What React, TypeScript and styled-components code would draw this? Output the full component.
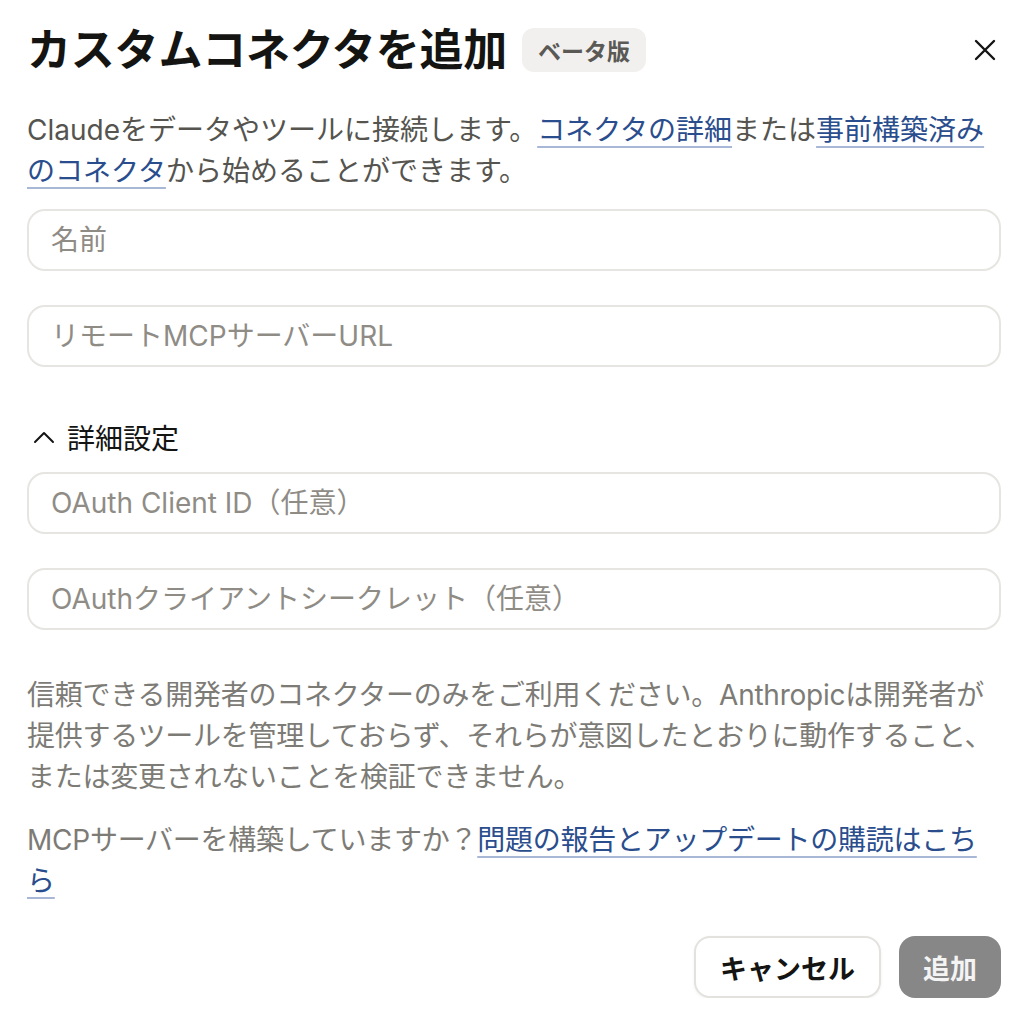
import styled, { createGlobalStyle } from "styled-components";

const GlobalStyle = createGlobalStyle`
  body {
    margin: 0;
    background: #ffffff;
    font-family: "Inter", "Noto Sans CJK JP", sans-serif;
    color: #141413;
  }
`;

export default function App() {
  return (
    <>
      <GlobalStyle />
      <Dialog>
        <Header>
          <TitleGroup>
            <Title>カスタムコネクタを追加</Title>
            <Badge>ベータ版</Badge>
          </TitleGroup>
          <CloseButton aria-label="閉じる">
            <svg width="24" height="24" viewBox="0 0 24 24" fill="none" stroke="#141413" strokeWidth="2.4" strokeLinecap="round">
              <path d="M3 3 L21 21 M21 3 L3 21" />
            </svg>
          </CloseButton>
        </Header>

        <Description>
          Claudeをデータやツールに接続します。<Link>コネクタの詳細</Link>または<Link>事前構築済みのコネクタ</Link>から始めることができます。
        </Description>

        <Fields>
          <Input placeholder="名前" />
          <Input placeholder="リモートMCPサーバーURL" />
        </Fields>

        <Toggle>
          <svg width="22" height="14" viewBox="0 0 22 14" fill="none" stroke="#141413" strokeWidth="2" strokeLinecap="round" strokeLinejoin="round">
            <path d="M2 12 L11 3 L20 12" />
          </svg>
          詳細設定
        </Toggle>

        <Fields>
          <Input placeholder="OAuth Client ID（任意）" />
          <Input placeholder="OAuthクライアントシークレット（任意）" />
        </Fields>

        <Note>
          信頼できる開発者のコネクターのみをご利用ください。Anthropicは開発者が提供するツールを管理しておらず、それらが意図したとおりに動作すること、または変更されないことを検証できません。
        </Note>
        <Note $spaced>
          MCPサーバーを構築していますか？<Link>問題の報告とアップデートの購読はこちら</Link>
        </Note>

        <Actions>
          <Button>キャンセル</Button>
          <Button $primary disabled>追加</Button>
        </Actions>
      </Dialog>
    </>
  );
}

const Dialog = styled.div`
  padding: 22px 33px 0 27px;
  display: flex;
  flex-direction: column;
`;

const Header = styled.div`
  display: flex;
  align-items: center;
  justify-content: space-between;
  height: 56px;
`;

const TitleGroup = styled.div`
  display: flex;
  align-items: center;
  gap: 15px;
`;

const Title = styled.h1`
  margin: 0;
  font-size: 44px;
  font-weight: 700;
  line-height: 56px;
  letter-spacing: -0.2px;
  color: #141413;
`;

const Badge = styled.span`
  display: inline-flex;
  align-items: center;
  height: 44px;
  padding: 0 16px;
  border-radius: 12px;
  background: #f1f0ee;
  color: #5a5955;
  font-size: 23px;
  font-weight: 700;
`;

const CloseButton = styled.button`
  border: none;
  background: none;
  padding: 0;
  margin-right: 4px;
  width: 24px;
  height: 24px;
  display: flex;
  cursor: pointer;
`;

const Description = styled.p`
  margin: 32px 0 0;
  font-size: 28px;
  line-height: 41px;
  color: #55544f;
`;

const Link = styled.a`
  color: #2a4d8d;
  text-decoration: underline;
  text-decoration-color: #a8b7d6;
  text-decoration-thickness: 2px;
  text-underline-offset: 6px;
  cursor: pointer;
`;

const Fields = styled.div`
  display: flex;
  flex-direction: column;
  gap: 34px;
  margin-top: 17px;
`;

const Input = styled.input`
  box-sizing: border-box;
  width: 100%;
  height: 62px;
  padding: 0 22px;
  border: 2px solid #e6e5e1;
  border-radius: 18px;
  background: #ffffff;
  font-family: "Inter", "Noto Sans CJK JP", sans-serif;
  font-size: 28px;
  color: #141413;
  outline: none;

  &::placeholder {
    color: #8f8c86;
  }
`;

const Toggle = styled.button`
  display: flex;
  align-items: center;
  gap: 12px;
  margin-top: 52px;
  padding: 0 0 0 6px;
  height: 36px;
  border: none;
  background: none;
  font-family: "Inter", "Noto Sans CJK JP", sans-serif;
  font-size: 28px;
  color: #141413;
  cursor: pointer;
  align-self: flex-start;
`;

const Note = styled.p<{ $spaced?: boolean }>`
  margin: ${(p) => (p.$spaced ? "22px" : "45px")} 0 0;
  font-size: 28px;
  line-height: 41px;
  letter-spacing: -0.25px;
  color: #7d7b76;
`;

const Actions = styled.div`
  display: flex;
  justify-content: flex-end;
  gap: 18px;
  margin-top: 34px;
`;

const Button = styled.button<{ $primary?: boolean }>`
  height: 62px;
  padding: 0 24px;
  border-radius: 16px;
  font-family: "Inter", "Noto Sans CJK JP", sans-serif;
  font-size: 27px;
  font-weight: 700;
  cursor: pointer;
  border: ${(p) => (p.$primary ? "none" : "2px solid #e3e2de")};
  background: ${(p) => (p.$primary ? "#878787" : "#ffffff")};
  color: ${(p) => (p.$primary ? "#f4f4f4" : "#141413")};
  box-shadow: ${(p) => (p.$primary ? "none" : "0 1px 3px rgba(0,0,0,0.06)")};
`;
